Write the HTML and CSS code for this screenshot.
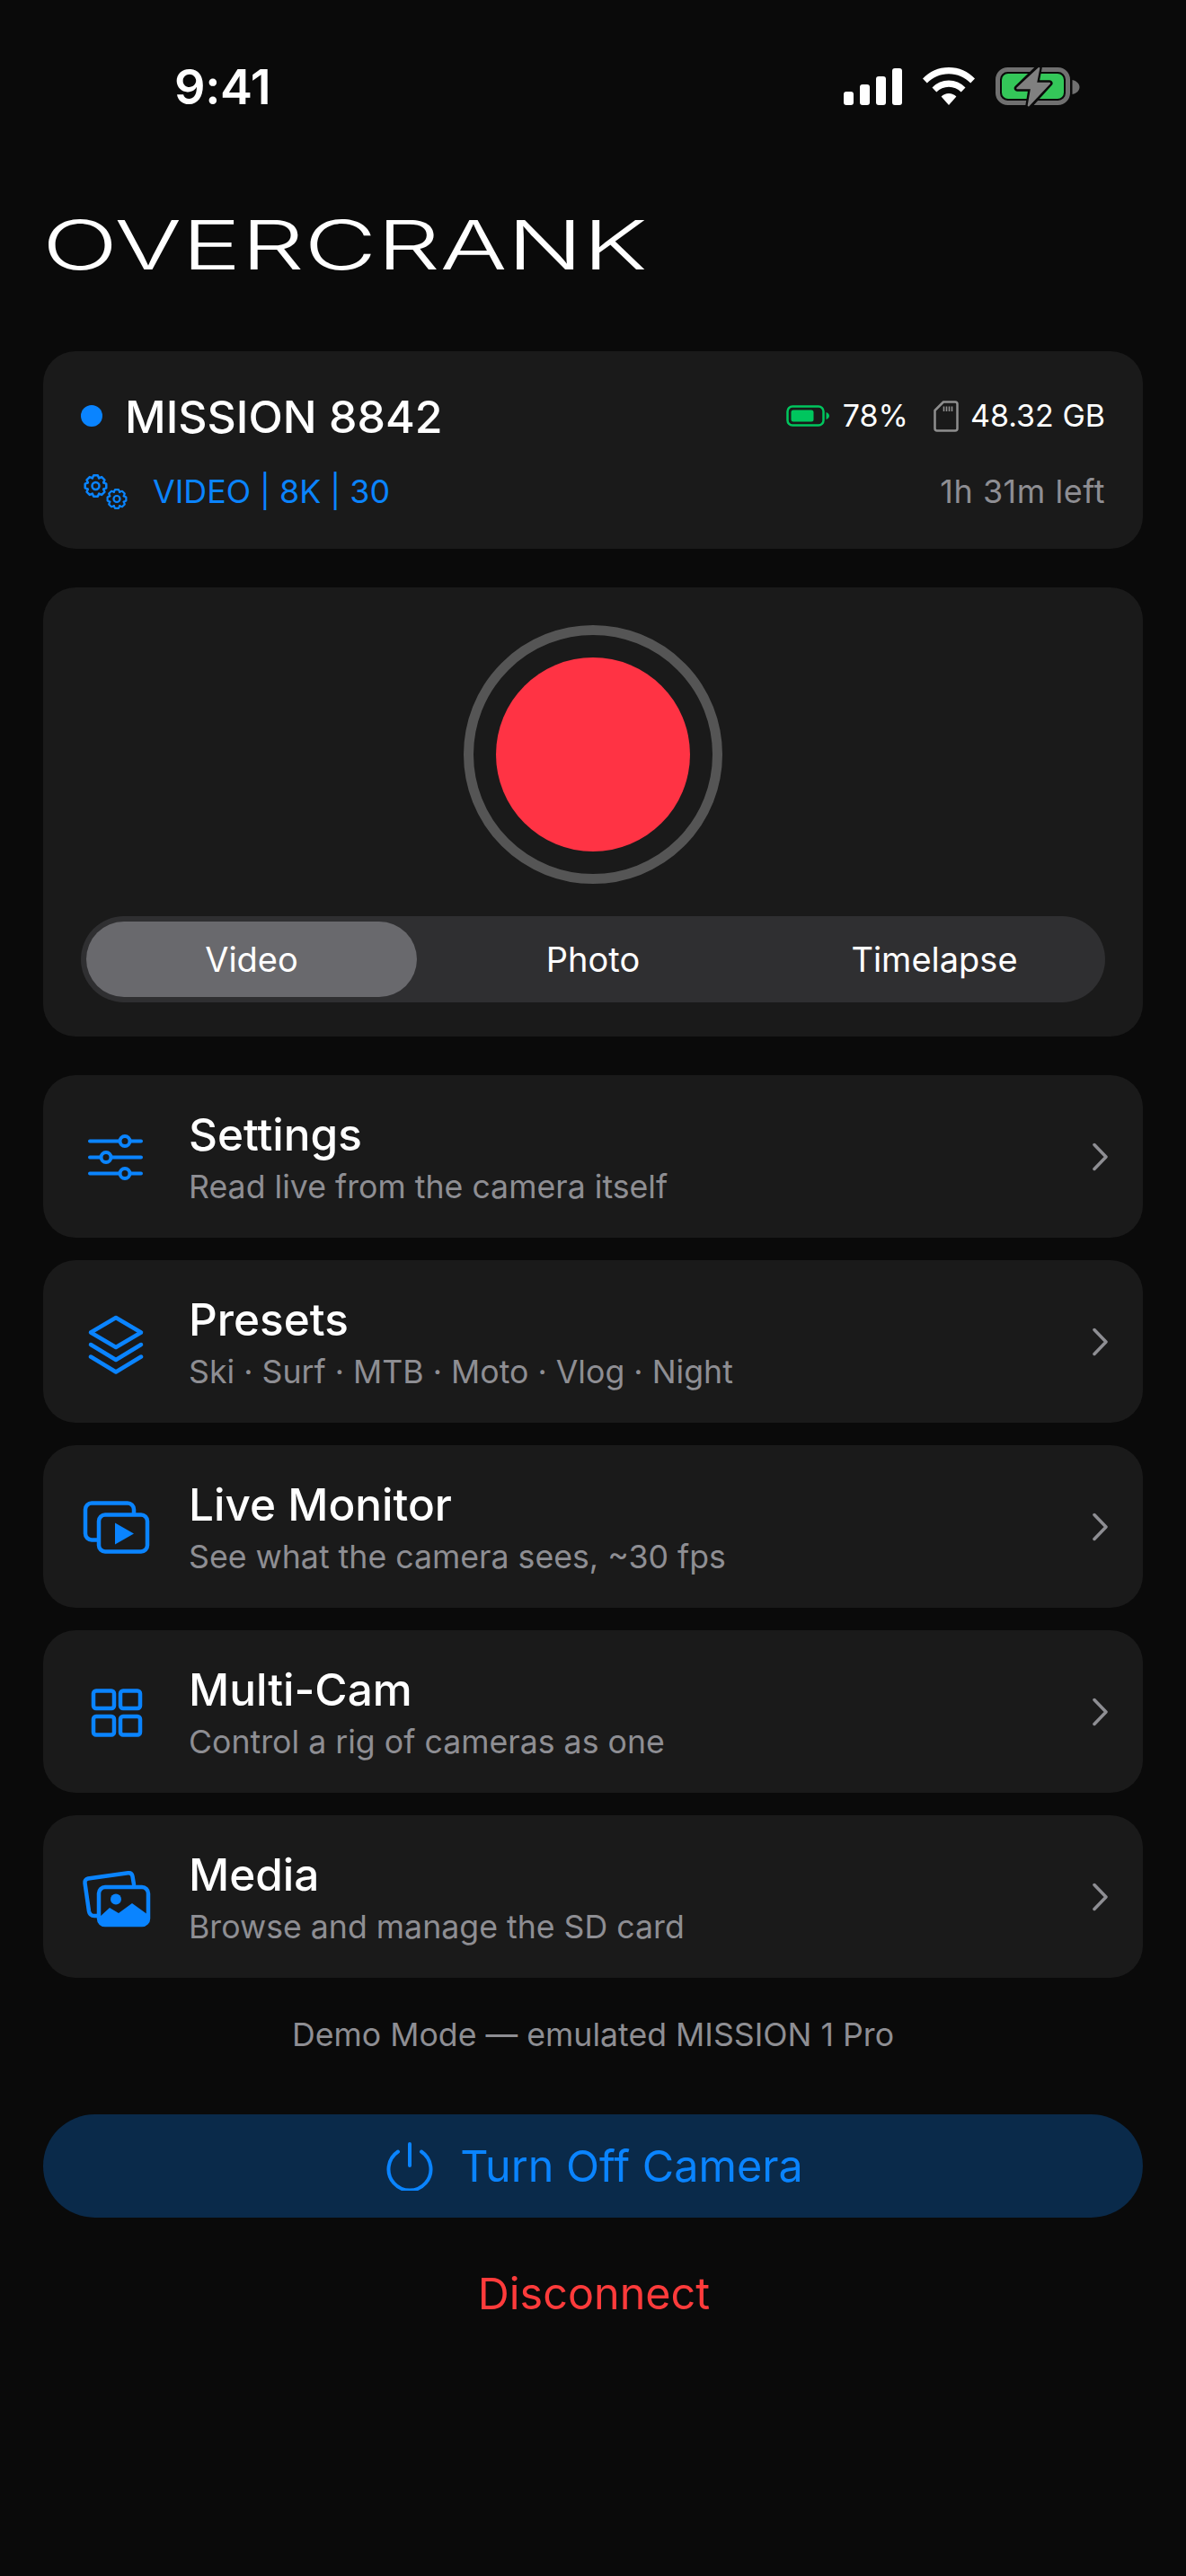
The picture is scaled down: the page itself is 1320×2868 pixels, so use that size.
FILE: index.html
```html
<!DOCTYPE html>
<html lang="en">
<head>
<meta charset="utf-8">
<title>Overcrank</title>
<link rel="stylesheet" href="styles.css">
</head>
<body>
<div class="screen">
  <header class="status-bar">
    <span class="clock">9:41</span>
    <div class="status-icons">
      <svg class="sb-signal" width="65" height="41" viewBox="0 0 65 41"><rect x="0" y="26" width="11" height="15" rx="3"/><rect x="18" y="18" width="11" height="23" rx="3"/><rect x="36" y="9" width="11" height="32" rx="3"/><rect x="54" y="0" width="11" height="41" rx="3"/></svg>
      <svg class="sb-wifi" width="58" height="42" viewBox="0 0 58 42"><path d="M29 0C17.500 0 7.500 4.500 0 12.500L4.800 17.500C11 11 19.500 7.200 29 7.200S47 11 53.200 17.500L58 12.500C50.500 4.500 40.500 0 29 0Z"/><path d="M29 14.500C22 14.500 15.500 17.300 10.500 22.500L15.300 27.500C19 24 23.700 21.800 29 21.800S39 24 42.700 27.500L47.500 22.500C42.500 17.300 36 14.500 29 14.500Z"/><path d="M29 29C25.800 29 22.800 30.300 20.600 32.500L29 42L37.400 32.500C35.200 30.300 32.200 29 29 29Z"/></svg>
      <svg class="sb-batt" width="94" height="44" viewBox="0 0 94 44"><rect x="2.500" y="2.500" width="78" height="37" rx="11" fill="none" stroke="#707070" stroke-width="5"/><path d="M85.500 14C90 15 93.500 18 93.500 22S90 29 85.500 30Z" fill="#707070"/><rect x="7" y="7" width="69" height="28" rx="7" fill="#34c759"/><path d="M48.300 0L24.300 23.300H40L36.700 43.300L60 17.700H45Z" fill="#0a0a0a" stroke="#0a0a0a" stroke-width="7" stroke-linejoin="round"/><path d="M48.300 1L24.300 23.300H40L36.700 42.500L60 17.700H45Z" fill="#808080" stroke="#808080" stroke-width="2" stroke-linejoin="round"/></svg>
    </div>
  </header>

  <h1 class="brand"><span class="brand-text">OVERCRANK</span></h1>

  <section class="card device">
    <div class="device-row">
      <div class="device-name"><span class="dot"></span><span class="name">MISSION 8842</span></div>
      <div class="device-stats">
        <svg class="mini-batt" width="48" height="24" viewBox="0 0 48 24"><rect x="1.500" y="1.500" width="40" height="21" rx="5.500" fill="none" stroke="#00c65e" stroke-width="2.500"/><rect x="5.500" y="5.500" width="25" height="13" rx="2.500" fill="#00c65e"/><path d="M44.500 8C47 9 48 10.500 48 12S47 15 44.500 16Z" fill="#00c65e"/></svg>
        <span class="stat batt-val">78%</span>
        <svg class="sd" width="28" height="35" viewBox="0 0 28 35"><path d="M11 1.500H24A2.500 2.500 0 0 1 26.500 4V31A2.500 2.500 0 0 1 24 33.500H4A2.500 2.500 0 0 1 1.500 31V11Z" fill="none" stroke="#8e8e8e" stroke-width="2.500" stroke-linejoin="round"/><path d="M11.500 6.500V12M14.500 6.500V12M17.500 6.500V12M20.500 6.500V12" stroke="#8e8e8e" stroke-width="1.600"/></svg>
        <span class="stat">48.32 GB</span>
      </div>
    </div>
    <div class="device-row">
      <div class="mode-line">
        <svg class="gears" width="50" height="40" viewBox="0 0 50 40">
          <defs><path id="tooth" d="M-3.640-8.780L-2.290-11.780H2.290L3.640-8.780"/></defs>
          <g fill="none" stroke="#0a84ff" stroke-width="2.500" stroke-linejoin="round" stroke-linecap="round">
            <g transform="translate(14.500 14)">
              <circle r="4"/>
              <use href="#tooth"/><use href="#tooth" transform="rotate(45)"/><use href="#tooth" transform="rotate(90)"/><use href="#tooth" transform="rotate(135)"/><use href="#tooth" transform="rotate(180)"/><use href="#tooth" transform="rotate(225)"/><use href="#tooth" transform="rotate(270)"/><use href="#tooth" transform="rotate(315)"/>
            </g>
            <g transform="translate(38 28.500) scale(.88)">
              <circle r="4"/>
              <use href="#tooth"/><use href="#tooth" transform="rotate(45)"/><use href="#tooth" transform="rotate(90)"/><use href="#tooth" transform="rotate(135)"/><use href="#tooth" transform="rotate(180)"/><use href="#tooth" transform="rotate(225)"/><use href="#tooth" transform="rotate(270)"/><use href="#tooth" transform="rotate(315)"/>
            </g>
          </g>
        </svg>
        <span class="mode">VIDEO | 8K | 30</span>
      </div>
      <span class="left">1h 31m left</span>
    </div>
  </section>

  <section class="card capture">
    <div class="rec-ring"><div class="rec-dot"></div></div>
    <div class="segments">
      <div class="seg seg-on">Video</div>
      <div class="seg">Photo</div>
      <div class="seg">Timelapse</div>
    </div>
  </section>

  <nav class="menu">
    <a class="card row">
      <svg class="row-icon" width="80" height="80" viewBox="0 0 80 80"><g fill="#1a1a1a" stroke="#0a84ff" stroke-width="4" stroke-linecap="round"><path d="M10 22.500H67M10 40.500H67M10 58.500H67"/><circle cx="49" cy="22.500" r="5.500"/><circle cx="28" cy="40.500" r="5.500"/><circle cx="49" cy="58.500" r="5.500"/></g></svg>
      <div class="row-text"><div class="row-title">Settings</div><div class="row-sub">Read live from the camera itself</div></div>
      <svg class="chev" width="20" height="32" viewBox="0 0 20 32"><path d="M5 2.500L18 16L5 29.500" fill="none" stroke="#8e8e93" stroke-width="3.500" stroke-linecap="round" stroke-linejoin="round"/></svg>
    </a>
    <a class="card row">
      <svg class="row-icon" width="80" height="80" viewBox="0 0 80 80"><g fill="none" stroke="#0a84ff" stroke-width="4.500" stroke-linecap="round" stroke-linejoin="round"><path d="M39 13L67 29.500L39 46L11 29.500Z"/><path d="M11 43L39 60L67 43"/><path d="M11 56.500L39 73.500L67 56.500"/></g></svg>
      <div class="row-text"><div class="row-title">Presets</div><div class="row-sub">Ski · Surf · MTB · Moto · Vlog · Night</div></div>
      <svg class="chev" width="20" height="32" viewBox="0 0 20 32"><path d="M5 2.500L18 16L5 29.500" fill="none" stroke="#8e8e93" stroke-width="3.500" stroke-linecap="round" stroke-linejoin="round"/></svg>
    </a>
    <a class="card row">
      <svg class="row-icon" width="80" height="80" viewBox="0 0 80 80"><g stroke="#0a84ff" stroke-width="4.500"><rect x="5" y="13.500" width="54" height="41" rx="7" fill="none"/><rect x="20" y="26.500" width="54" height="41" rx="7" fill="#1a1a1a"/></g><path d="M38 35.500L59 47.500L38 59.500Z" fill="#0a84ff"/></svg>
      <div class="row-text"><div class="row-title">Live Monitor</div><div class="row-sub">See what the camera sees, ~30 fps</div></div>
      <svg class="chev" width="20" height="32" viewBox="0 0 20 32"><path d="M5 2.500L18 16L5 29.500" fill="none" stroke="#8e8e93" stroke-width="3.500" stroke-linecap="round" stroke-linejoin="round"/></svg>
    </a>
    <a class="card row">
      <svg class="row-icon" width="80" height="80" viewBox="0 0 80 80"><g fill="none" stroke="#0a84ff" stroke-width="4.500"><rect x="14" y="16.500" width="23" height="19.500" rx="3"/><rect x="44" y="16.500" width="22" height="19.500" rx="3"/><rect x="14" y="45" width="23" height="20.500" rx="3"/><rect x="44" y="45" width="22" height="20.500" rx="3"/></g></svg>
      <div class="row-text"><div class="row-title">Multi-Cam</div><div class="row-sub">Control a rig of cameras as one</div></div>
      <svg class="chev" width="20" height="32" viewBox="0 0 20 32"><path d="M5 2.500L18 16L5 29.500" fill="none" stroke="#8e8e93" stroke-width="3.500" stroke-linecap="round" stroke-linejoin="round"/></svg>
    </a>
    <a class="card row">
      <svg class="row-icon" width="80" height="80" viewBox="0 0 80 80"><path d="M59 26L57.500 17C57 14 55 13 52.500 13.300L8 19.500C5.500 20 4 22 4.500 24.500L9 56C9.500 59 11.500 61 15 61H18" fill="none" stroke="#0a84ff" stroke-width="4.500" stroke-linecap="round"/><rect x="20" y="29" width="55" height="42" rx="7" fill="none" stroke="#0a84ff" stroke-width="4.500"/><path d="M20 63L32 52L42 58L57 47L75 60V66C75 70 72 73 68 73H26C22 73 19 70 19 66Z" fill="#0a84ff"/><circle cx="39" cy="42.500" r="6" fill="#0a84ff"/></svg>
      <div class="row-text"><div class="row-title">Media</div><div class="row-sub">Browse and manage the SD card</div></div>
      <svg class="chev" width="20" height="32" viewBox="0 0 20 32"><path d="M5 2.500L18 16L5 29.500" fill="none" stroke="#8e8e93" stroke-width="3.500" stroke-linecap="round" stroke-linejoin="round"/></svg>
    </a>
  </nav>

  <p class="demo">Demo Mode — emulated MISSION 1 Pro</p>

  <a class="power">
    <svg width="52" height="54" viewBox="0 0 52 54"><path d="M13 10.500A23.500 23.500 0 1 0 39 10.500M26 2V26" fill="none" stroke="#0a84ff" stroke-width="4" stroke-linecap="round"/></svg>
    <span>Turn Off Camera</span>
  </a>
  <a class="disconnect">Disconnect</a>
</div>
</body>
</html>
```

FILE: styles.css
```css
* { box-sizing: border-box; }
html, body { margin: 0; padding: 0; background: #0a0a0a; }
body { font-family: Inter, "Liberation Sans", sans-serif; color: #fff; }
.screen { width: 1320px; height: 2868px; padding: 0 48px; overflow: hidden; }

.status-bar { height: 118px; padding: 74px 118px 0 146px; display: flex; justify-content: space-between; align-items: flex-start; margin: 0 -48px 0 0; }
.clock { font-size: 54px; line-height: 46px; font-weight: 600; letter-spacing: -0.4px; }
.status-icons { display: flex; align-items: flex-start; gap: 23px; }
.sb-signal, .sb-wifi { fill: #fff; }
.sb-signal { margin-top: 2px; }
.sb-wifi { margin-top: 1px; }
.sb-batt { margin-top: 1px; }

.brand { margin: 0; height: 273px; padding-top: 116px; font-size: 76px; line-height: 76px; font-weight: 300; }
.brand-text { display: inline-block; transform: scaleX(1.46); transform-origin: left center; margin-left: -1px; }

.card { display: block; background: #1a1a1a; border-radius: 36px; }

.device { height: 220px; padding: 42px 42px 0; }
.device-row { display: flex; justify-content: space-between; align-items: center; }
.device-row + .device-row { margin-top: 32px; }
.device-row:first-child { height: 60px; }
.device-name { display: flex; align-items: center; gap: 25px; }
.dot { width: 24px; height: 24px; border-radius: 50%; background: #0a84ff; }
.name { font-size: 50px; line-height: 60px; font-weight: 500; padding-top: 2px; }
.device-stats { display: flex; align-items: center; }
.mini-batt { margin-right: 15px; }
.batt-val { margin-right: 28px; }
.sd { margin-right: 13px; }
.stat { font-size: 34px; line-height: 40px; }
.mode-line { display: flex; align-items: center; gap: 28px; }
.gears { margin-left: 2px; }
.mode { font-size: 35.800px; line-height: 44px; color: #0a84ff; font-weight: 400; }
.left { font-size: 36px; line-height: 44px; letter-spacing: 0.5px; color: #8e8e93; }

.capture { margin-top: 43px; height: 500px; padding: 42px 42px 0; display: flex; flex-direction: column; align-items: center; }
.rec-ring { flex: none; width: 288px; height: 288px; border-radius: 50%; border: 11px solid #555; display: flex; align-items: center; justify-content: center; }
.rec-dot { width: 216px; height: 216px; border-radius: 50%; background: #ff3344; }
.segments { margin-top: 36px; width: 100%; height: 96px; padding: 6px; border-radius: 48px; background: #2f2f31; display: grid; grid-template-columns: repeat(3, 1fr); gap: 12px; }
.seg { display: flex; align-items: center; justify-content: center; font-size: 38px; border-radius: 42px; font-weight: 400; }
.seg-on { background: #69696d; }

.menu { margin-top: 43px; display: flex; flex-direction: column; gap: 25px; }
.row { height: 181px; padding: 0 39px 0 42px; display: flex; align-items: center; }
.row-icon { flex: none; margin-right: 40px; }
.row-text { flex: 1; }
.row-title { font-size: 49.500px; line-height: 60px; font-weight: 500; }
.row-sub { margin-top: 7px; font-size: 35.700px; line-height: 42px; color: #8e8e93; }
.chev { flex: none; }

.demo { margin: 42px 0 0; text-align: center; font-size: 35.700px; line-height: 42px; color: #8e8e93; }

.power { margin-top: 68px; height: 115px; padding-left: 4px; border-radius: 58px; background: #0a2a4a; color: #0a84ff; display: flex; align-items: center; justify-content: center; gap: 30px; font-size: 48.500px; }
.disconnect { display: block; margin-top: 56px; padding-left: 2px; text-align: center; font-size: 48.500px; line-height: 58px; color: #ff3b3b; }
```
